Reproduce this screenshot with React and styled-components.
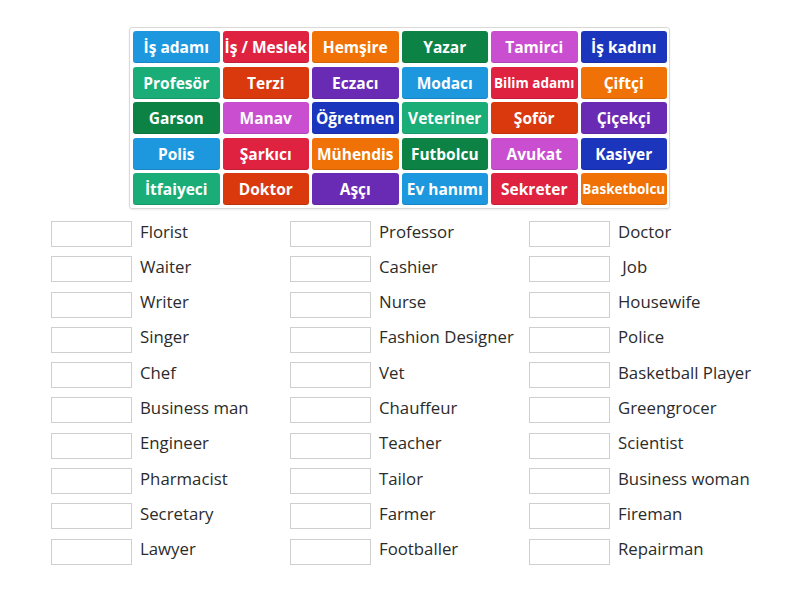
import React from 'react';
import styled, { createGlobalStyle } from 'styled-components';

const GlobalStyle = createGlobalStyle`
  body {
    margin: 0;
    background: #fff;
    font-family: "Open Sans", "Liberation Sans", sans-serif;
  }
`;

const palette = [
  '#1d98df', // blue
  '#df2240', // red
  '#f07206', // orange
  '#0c8244', // green
  '#c94fd0', // orchid
  '#1b35bd', // navy
  '#1aad78', // teal
  '#d9390d', // orange red
  '#6a2bb4', // purple
];

const tiles = [
  'İş adamı', 'İş / Meslek', 'Hemşire', 'Yazar', 'Tamirci', 'İş kadını',
  'Profesör', 'Terzi', 'Eczacı', 'Modacı', 'Bilim adamı', 'Çiftçi',
  'Garson', 'Manav', 'Öğretmen', 'Veteriner', 'Şoför', 'Çiçekçi',
  'Polis', 'Şarkıcı', 'Mühendis', 'Futbolcu', 'Avukat', 'Kasiyer',
  'İtfaiyeci', 'Doktor', 'Aşçı', 'Ev hanımı', 'Sekreter', 'Basketbolcu',
];

const smallTiles = { 'Bilim adamı': 13.5, Basketbolcu: 13.5 };

const columns = [
  ['Florist', 'Waiter', 'Writer', 'Singer', 'Chef', 'Business man', 'Engineer', 'Pharmacist', 'Secretary', 'Lawyer'],
  ['Professor', 'Cashier', 'Nurse', 'Fashion Designer', 'Vet', 'Chauffeur', 'Teacher', 'Tailor', 'Farmer', 'Footballer'],
  ['Doctor', '\u00a0Job', 'Housewife', 'Police', 'Basketball Player', 'Greengrocer', 'Scientist', 'Business woman', 'Fireman', 'Repairman'],
];

const Page = styled.div`
  width: 800px;
  height: 600px;
  padding-top: 27px;
  box-sizing: border-box;
`;

const TilePanel = styled.div`
  margin-left: 129px;
  width: 541px;
  box-sizing: border-box;
  padding: 3px 2px 3px 3px;
  border: 1px solid #d9d9d9;
  border-radius: 3px;
  box-shadow: 0 1px 2px rgba(0, 0, 0, 0.08);
  display: grid;
  grid-template-columns: repeat(6, 1fr);
  grid-auto-rows: 32px;
  column-gap: 3px;
  row-gap: 3.5px;
`;

const Tile = styled.div`
  background: ${(p) => p.$bg};
  border-radius: 3px;
  color: #fff;
  font-weight: 700;
  font-size: ${(p) => p.$size}px;
  display: flex;
  align-items: center;
  justify-content: center;
  white-space: nowrap;
  overflow: hidden;
  box-shadow: inset 0 -1px 0 rgba(0, 0, 0, 0.12);
`;

const Answers = styled.div`
  display: flex;
  margin-top: 12px;
  padding-left: 51px;
`;

const Column = styled.div`
  width: 239px;
  display: flex;
  flex-direction: column;
  gap: 9.3px;
`;

const Row = styled.div`
  display: flex;
  align-items: center;
  gap: 8px;
  height: 26px;
`;

const Slot = styled.div`
  width: 81px;
  height: 26px;
  box-sizing: border-box;
  border: 1px solid #cfcfcf;
  background: #fff;
  flex-shrink: 0;
`;

const Label = styled.span`
  font-size: 16.8px;
  line-height: 22px;
  padding-bottom: 5px;
  color: #2b2b2b;
  white-space: nowrap;
`;

export default function App() {
  return (
    <Page>
      <GlobalStyle />
      <TilePanel>
        {tiles.map((t, i) => (
          <Tile key={t} $bg={palette[i % palette.length]} $size={smallTiles[t] || 15.5}>
            {t}
          </Tile>
        ))}
      </TilePanel>
      <Answers>
        {columns.map((col, ci) => (
          <Column key={ci}>
            {col.map((w) => (
              <Row key={w}>
                <Slot />
                <Label>{w}</Label>
              </Row>
            ))}
          </Column>
        ))}
      </Answers>
    </Page>
  );
}
